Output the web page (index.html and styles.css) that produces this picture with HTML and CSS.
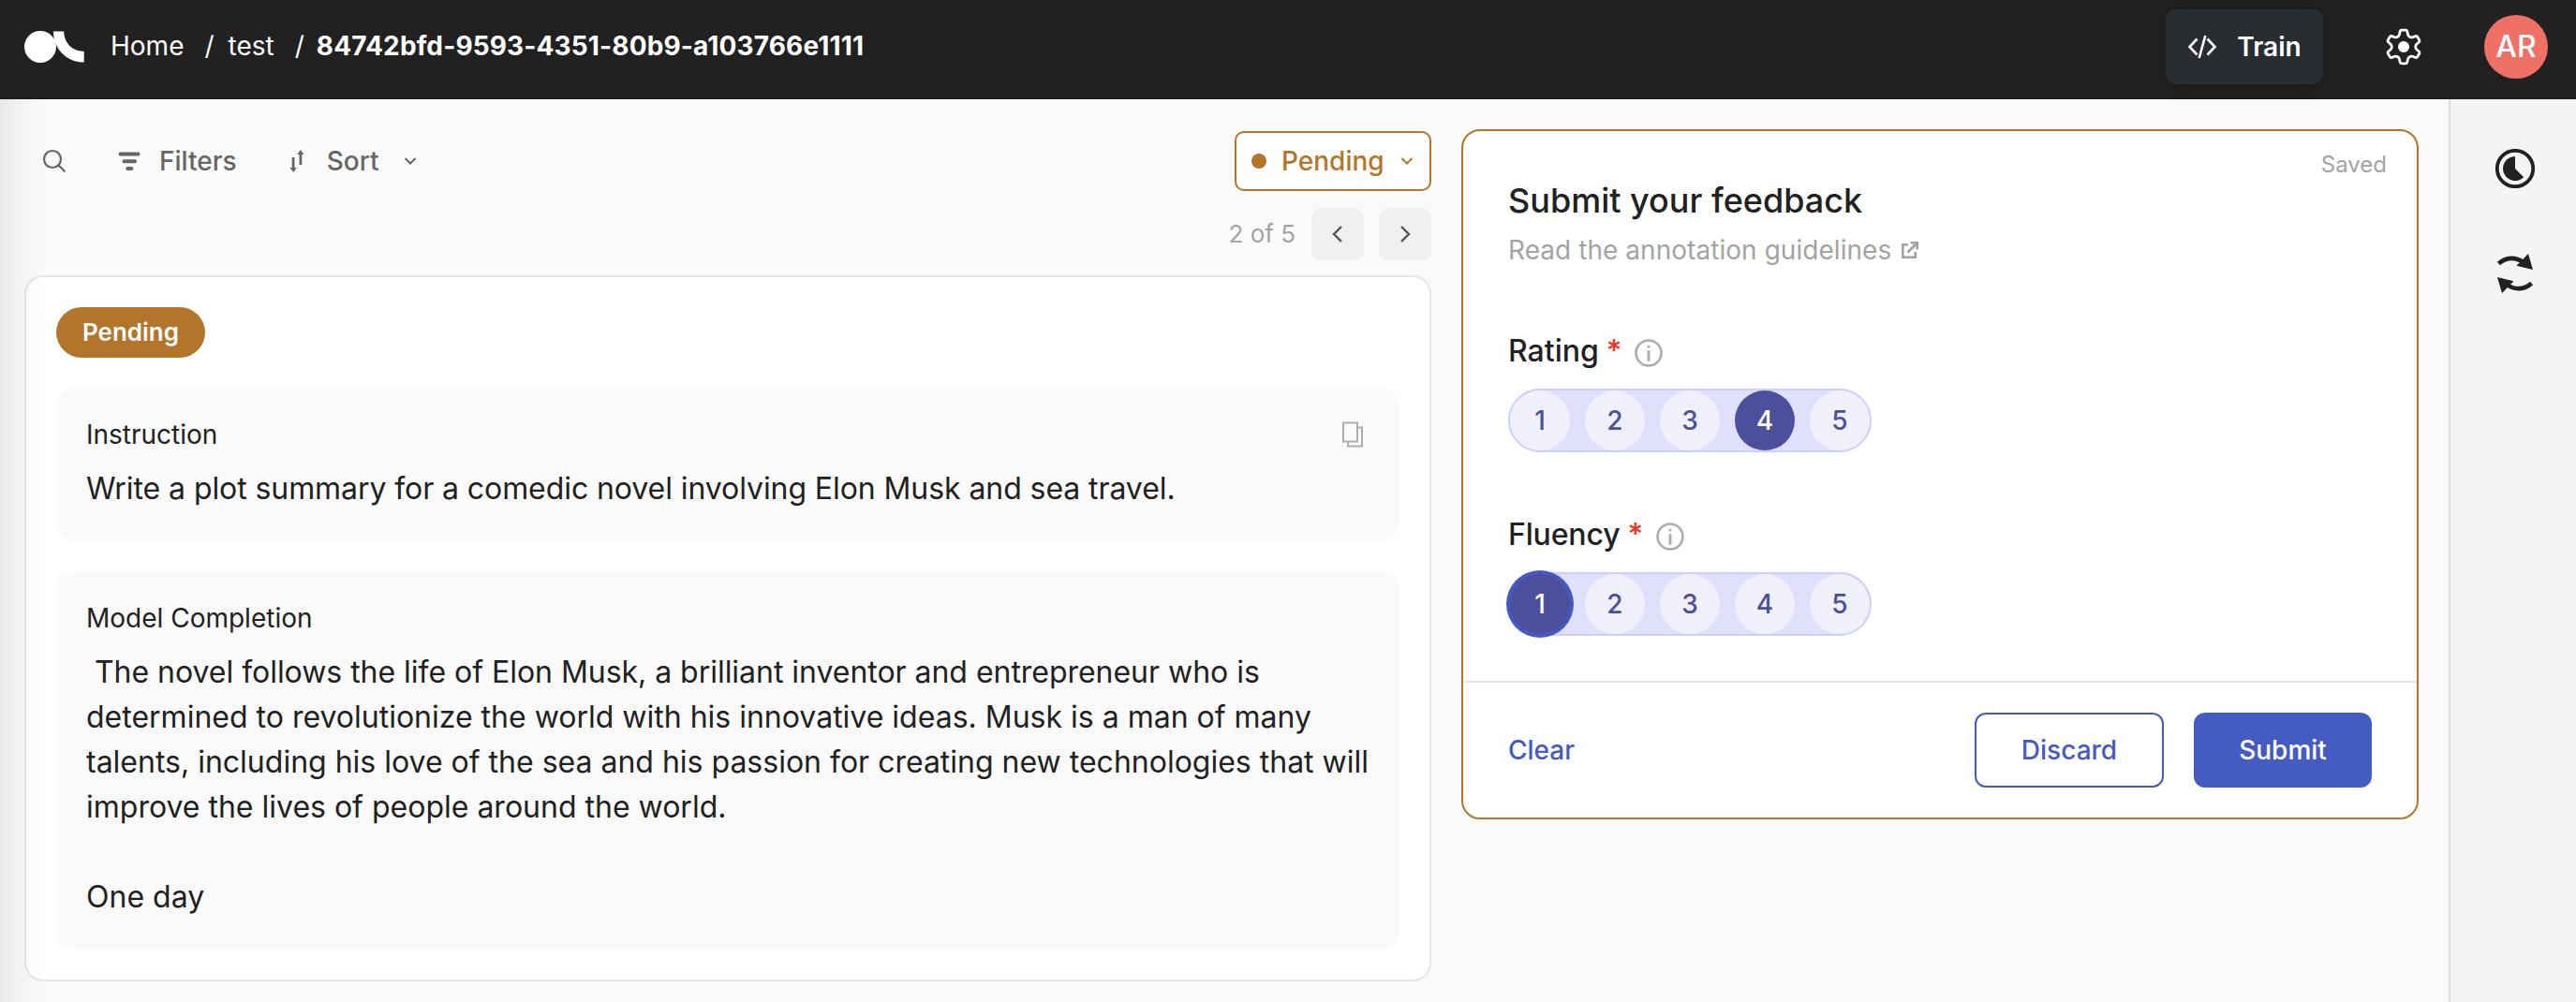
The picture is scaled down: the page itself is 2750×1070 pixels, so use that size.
FILE: index.html
```
<!DOCTYPE html>
<html lang="en">
<head>
<meta charset="utf-8">
<title>Feedback task</title>
<link rel="stylesheet" href="styles.css">
</head>
<body>
<header class="topbar">
  <svg class="logo" width="66" height="38" viewBox="0 0 66 38" fill="#fff"><circle cx="17" cy="19" r="17"/><path d="M31 2.500h11.300v.5c0 11.500 9 20.700 20.400 20.700h1v11.800h-1C45.500 35.500 31 21 31 3z"/></svg>
  <nav class="crumbs"><span class="c-home">Home</span><span class="c-sep">/</span><span class="c-test">test</span><span class="c-sep c-sep2">/</span><b class="c-id">84742bfd-9593-4351-80b9-a103766e1111</b></nav>
  <button class="train">
    <svg width="32" height="26" viewBox="0 0 32 26" fill="none" stroke="#fff" stroke-width="2.600"><path d="M10.500 4.500 2.500 13l8 8.500M21.500 4.500l8 8.500-8 8.500M19.300 1l-6.600 24"/></svg>
    <span class="t-train">Train</span>
  </button>
  <svg class="gear" width="38" height="40" viewBox="0 0 38 40" fill="none" stroke="#fff" stroke-width="2.800" stroke-linejoin="round"><path d="M15.200 3.500 Q15.500 2.200 17 2.200 H21 Q22.500 2.200 22.800 3.500 L23.600 7.200 Q24.200 8.600 25.700 9.400 Q27.200 10.200 28.600 9.700 L31.600 8.600 Q33 8.200 33.800 9.500 L35.700 12.800 Q36.300 14 35.300 15 L32.800 17.200 Q31.700 18.300 31.700 20 Q31.700 21.700 32.800 22.800 L35.300 25 Q36.300 26 35.700 27.200 L33.800 30.500 Q33 31.800 31.600 31.400 L28.600 30.300 Q27.200 29.800 25.700 30.600 Q24.200 31.400 23.600 32.800 L22.800 36.500 Q22.500 37.800 21 37.800 H17 Q15.500 37.800 15.200 36.500 L14.400 32.800 Q13.800 31.400 12.300 30.600 Q10.800 29.800 9.400 30.300 L6.400 31.400 Q5 31.800 4.200 30.500 L2.300 27.200 Q1.700 26 2.700 25 L5.200 22.800 Q6.300 21.700 6.300 20 Q6.300 18.300 5.200 17.200 L2.700 15 Q1.700 14 2.300 12.800 L4.200 9.500 Q5 8.200 6.400 8.600 L9.400 9.700 Q10.800 10.200 12.300 9.400 Q13.800 8.600 14.400 7.200 Z"/><circle cx="19" cy="20" r="6" fill="#fff" stroke="none"/></svg>
  <div class="avatar"><span class="t-ar">AR</span></div>
</header>
<div class="page">
  <main class="workspace">
    <section class="records">
      <div class="toolbar">
        <svg class="i-search" width="26" height="26" viewBox="0 0 26 26" fill="none" stroke="#666" stroke-width="2.200" stroke-linecap="round"><circle cx="11" cy="11" r="9"/><path d="m17.500 17.500 6.300 6.300"/></svg>
        <svg class="i-filter" width="24" height="22" viewBox="0 0 24 22" fill="none" stroke="#666" stroke-width="4" stroke-linecap="round"><path d="M2.500 3.500h19M6.500 11.200h11.500M10.200 19h4"/></svg>
        <span class="t-filters">Filters</span>
        <svg class="i-sort" width="16" height="26" viewBox="0 0 16 26" fill="#666"><path d="M2.700 9h2.800v11h2.300L4.200 25 .5 20h2.200zM13.300 17h-2.800V6H8.200l3.700-5 3.600 5h-2.200z"/></svg>
        <span class="t-sort">Sort</span>
        <svg class="i-chev" width="14" height="10" viewBox="0 0 14 10" fill="none" stroke="#666" stroke-width="2"><path d="m1.500 2 5.500 5.500L12.500 2"/></svg>
        <div class="status"><i class="dot"></i><span class="t-status">Pending</span><svg class="s-chev" width="14" height="10" viewBox="0 0 14 10" fill="none" stroke="#b2752a" stroke-width="2"><path d="m1.500 2 5.500 5.500L12.500 2"/></svg></div>
      </div>
      <div class="pager">
        <span class="t-count">2 of 5</span>
        <button class="page-btn"><svg width="12" height="18" viewBox="0 0 12 18" fill="none" stroke="#555" stroke-width="2.400"><path d="M10 1 2 9l8 8"/></svg></button>
        <button class="page-btn"><svg width="12" height="18" viewBox="0 0 12 18" fill="none" stroke="#555" stroke-width="2.400"><path d="m2 1 8 8-8 8"/></svg></button>
      </div>
      <article class="record">
        <div class="badge"><span class="t-badge">Pending</span></div>
        <div class="field">
          <div class="field-head"><span class="t-field">Instruction</span>
            <svg class="copy" width="24" height="28" viewBox="0 0 24 28" fill="none" stroke="#adadad" stroke-width="2"><path d="M2 1.500h15v20H2zM17.500 6.500H22v20H7V22"/></svg></div>
          <p class="text instruction">Write a plot summary for a comedic novel involving Elon Musk and sea travel.</p>
        </div>
        <div class="field">
          <div class="field-head"><span class="t-field2">Model Completion</span></div>
          <p class="text completion"> The novel follows the life of Elon Musk, a brilliant inventor and entrepreneur who is
determined to revolutionize the world with his innovative ideas. Musk is a man of many
talents, including his love of the sea and his passion for creating new technologies that will
improve the lives of people around the world.

One day</p>
        </div>
      </article>
    </section>
    <form class="feedback">
      <div class="form-body">
        <span class="saved">Saved</span>
        <h1 class="title"><span class="t-title">Submit your feedback</span></h1>
        <a class="guide"><span class="t-guide">Read the annotation guidelines</span><svg width="20" height="20" viewBox="0 0 20 20" fill="none" stroke="#a3a3a3" stroke-width="2.600"><path d="M8 4.200H2.300v13.500h13.400V12"/><path d="M7.500 12.500 17 3" stroke-width="2.800"/><path d="M10.500 2.300h7.200v7.200"/></svg></a>
        <div class="question">
          <div class="q-head"><span class="t-rating">Rating</span><b class="req">*</b><svg width="30" height="30" viewBox="0 0 30 30" fill="none" stroke="#adadad" stroke-width="2.600"><circle cx="15" cy="15" r="13.500"/><path d="M15 13.500v9" stroke-width="3" stroke-linecap="round"/><circle cx="15" cy="8" r="1.600" fill="#adadad" stroke="none"/></svg></div>
          <div class="scale"><span>1</span><span>2</span><span>3</span><span class="on">4</span><span>5</span></div>
        </div>
        <div class="question">
          <div class="q-head"><span class="t-fluency">Fluency</span><b class="req">*</b><svg width="30" height="30" viewBox="0 0 30 30" fill="none" stroke="#adadad" stroke-width="2.600"><circle cx="15" cy="15" r="13.500"/><path d="M15 13.500v9" stroke-width="3" stroke-linecap="round"/><circle cx="15" cy="8" r="1.600" fill="#adadad" stroke="none"/></svg></div>
          <div class="scale"><span class="on focus">1</span><span>2</span><span>3</span><span>4</span><span>5</span></div>
        </div>
      </div>
      <div class="actions">
        <span class="clear">Clear</span>
        <button class="btn discard"><span>Discard</span></button>
        <button class="btn submit"><span>Submit</span></button>
      </div>
    </form>
  </main>
  <aside class="rail">
    <svg width="42" height="42" viewBox="0 0 42 42"><circle cx="21" cy="21" r="19.200" fill="none" stroke="#212121" stroke-width="3.800"/><path d="M21 8v13l9.200 9.200A13 13 0 1 1 21 8z" fill="#212121"/></svg>
    <svg width="42" height="42" viewBox="0 0 42 42"><g id="arc"><path d="M3.500 10.500C11 3.500 21.500 3 29.500 9" fill="none" stroke="#212121" stroke-width="4.600"/><path d="M35 0l5 17-17.500-4.200z" fill="#212121"/></g><use href="#arc" transform="rotate(180 21 21)"/></svg>
  </aside>
  <div class="edge-shade"></div>
</div>
</body>
</html>
```
FILE: styles.css
```
* { box-sizing: border-box; }
body {
  margin: 0;
  height: 1070px;
  overflow: hidden;
  display: flex;
  flex-direction: column;
  background: #fafafa;
  color: #212121;
  font: 28px/36px Inter, "Liberation Sans", sans-serif;
  white-space: nowrap;
}
button { font: inherit; border: 0; padding: 0; display: flex; align-items: center; justify-content: center; }
svg { display: block; flex: none; }
span, b { flex: none; }

.topbar {
  height: 106px;
  flex: none;
  padding: 0 30px 6px 26px;
  display: flex;
  align-items: center;
  background: #212121;
  border-bottom: 1px solid #1a1a1a;
  color: #fff;
}
.logo { margin-right: 26px; }
.crumbs { display: flex; align-items: center; margin-top: -2px; }
.c-sep { margin-left: 22px; margin-right: 15px; }
.c-sep2 { margin-right: 13px; }
.c-id { letter-spacing: .14px; }
.train {
  margin-left: auto;
  width: 168px;
  height: 80px;
  border-radius: 10px;
  background: #292c31;
  color: #fff;
  font-weight: 600;
  gap: 21px;
  box-shadow: 0 2px 16px rgba(0, 0, 0, .25);
}
.gear { margin-left: 67px; }
.avatar {
  margin-left: 67px;
  width: 68px;
  height: 68px;
  border-radius: 50%;
  background: #ef7165;
  display: flex;
  align-items: center;
  justify-content: center;
  font-size: 32px;
  font-weight: 500;
}

.page { flex: 1; display: flex; position: relative; min-height: 0; }
.workspace { flex: 1; display: flex; gap: 32px; padding: 32px 32px 0 26px; align-items: flex-start; }
.edge-shade {
  position: absolute;
  inset: 0 auto 0 0;
  width: 48px;
  background: linear-gradient(90deg, rgba(0, 0, 0, .07), rgba(0, 0, 0, .03) 40%, transparent);
}

.records { width: 1502px; padding-top: 2px; }
.toolbar { height: 64px; display: flex; align-items: center; padding-left: 19px; color: #666; font-weight: 500; }
.i-filter { margin-left: 55px; }
.t-filters { margin-left: 20px; }
.i-sort { margin-left: 56px; }
.t-sort { margin-left: 24px; }
.i-chev { margin-left: 27px; }
.status {
  margin-left: auto;
  width: 210px;
  height: 64px;
  padding: 0 17px 0 16px;
  border: 2px solid #b2752a;
  border-radius: 10px;
  background: #fff;
  color: #b2752a;
  display: flex;
  align-items: center;
}
.dot { width: 16px; height: 16px; border-radius: 50%; background: #b2752a; margin-right: 16px; }
.s-chev { margin-left: auto; }

.pager { height: 56px; margin: 18px 0 16px; display: flex; align-items: center; justify-content: flex-end; gap: 16px; font-size: 26px; color: #a3a3a3; }
.t-count { margin-right: 1px; }
.page-btn { width: 56px; height: 56px; border-radius: 10px; background: #f0f0f0; }

.record { border: 2px solid #e6e6e6; border-radius: 20px; background: #fff; padding: 32px; display: flex; flex-direction: column; gap: 32px; }
.badge {
  align-self: flex-start;
  width: 159px;
  height: 54px;
  border-radius: 27px;
  background: #b2752a;
  color: #fff;
  font-size: 26px;
  font-weight: 600;
  display: flex;
  align-items: center;
  justify-content: center;
}
.field { background: #fafafa; border-radius: 20px; padding: 32px; }
.field-head { height: 36px; display: flex; align-items: center; justify-content: space-between; }
.copy { margin-right: 6px; }
.text { margin: 16px 0 0; font-size: 32px; line-height: 48px; white-space: pre; }
.instruction { letter-spacing: -.08px; }
.completion::first-line { letter-spacing: -.03px; }

.feedback { width: 1022px; border: 2px solid #b2752a; border-radius: 20px; background: #fff; }
.form-body { position: relative; height: 587px; padding: 50px 48px 0; }
.saved { position: absolute; top: 18px; right: 32px; font-size: 24px; color: #a3a3a3; }
.title { margin: 0; font-size: 36px; line-height: 48px; font-weight: 500; }
.guide { margin-top: 11px; display: flex; align-items: center; gap: 10px; color: #a3a3a3; height: 36px; letter-spacing: .05px; }
.question { margin-top: 70px; }
.question + .question { margin-top: 68px; }
.q-head { height: 40px; display: flex; align-items: center; font-size: 32px; line-height: 40px; font-weight: 500; }
.t-fluency { letter-spacing: -.15px; }
.req { color: #f0331e; font-weight: 500; margin: 0 14px 0 8px; }
.q-head svg { margin-top: 4px; }
.scale {
  width: 388px;
  height: 68px;
  margin-top: 20px;
  border: 2px solid #cdcdff;
  border-radius: 34px;
  background: #e0dffc;
  display: flex;
  gap: 16px;
}
.scale span {
  width: 64px;
  height: 64px;
  border-radius: 50%;
  background: #f0effc;
  color: #4c4f9c;
  font-weight: 500;
  display: flex;
  align-items: center;
  justify-content: center;
}
.scale .on { background: #4c4f9c; color: #fff; }
.scale .focus { box-shadow: 0 0 0 4px #4459c2; }
.actions { border-top: 2px solid #e6e6e6; padding: 32px 48px; display: flex; align-items: center; gap: 32px; font-weight: 500; color: #4459c2; }
.clear { margin-right: auto; }
.btn { height: 80px; border-radius: 12px; font-weight: 500; }
.discard { width: 202px; border: 2px solid #4459c2; background: #fff; color: #4459c2; }
.submit { width: 190px; background: #445bc2; color: #fff; }

.rail { width: 136px; border-left: 2px solid #ddd; background: #f4f4f4; padding: 53px 0 0 48px; display: flex; flex-direction: column; gap: 70px; }
```
